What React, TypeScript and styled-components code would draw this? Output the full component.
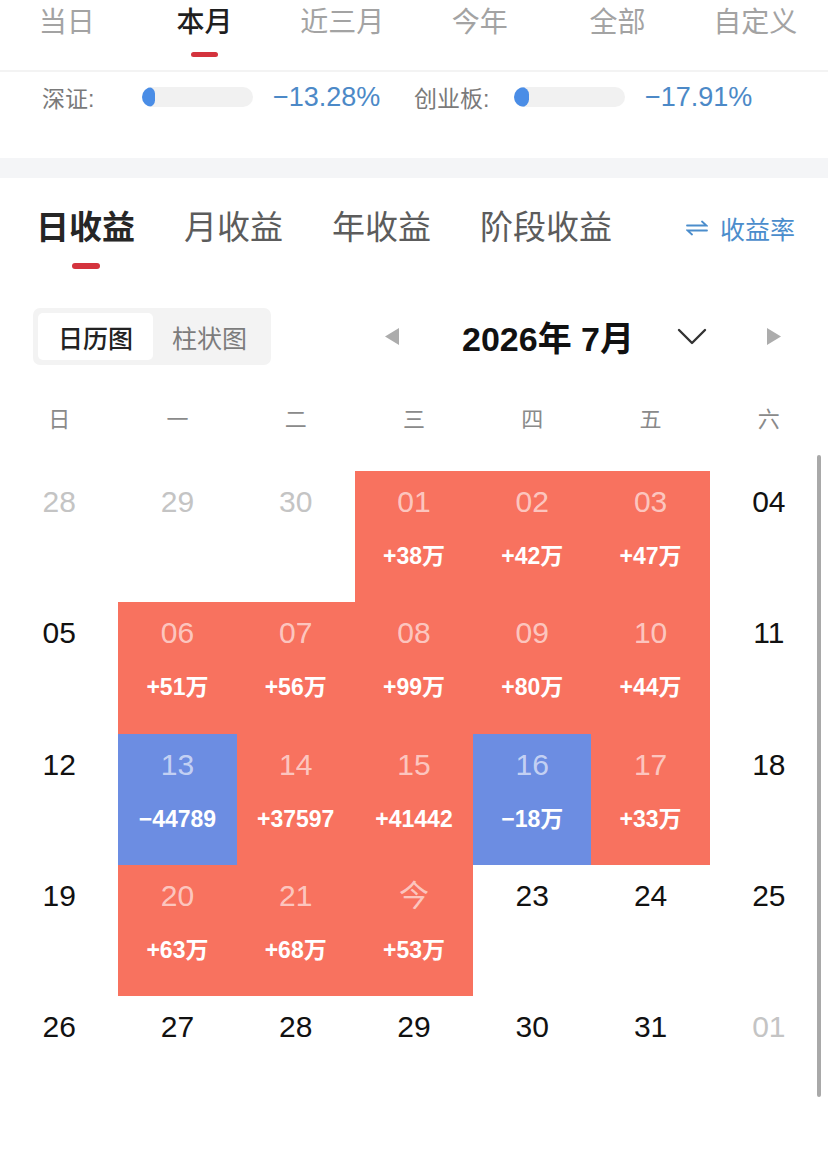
import * as React from 'react';
import styled, { createGlobalStyle } from 'styled-components';

const GlobalStyle = createGlobalStyle`
    html, body {
        margin: 0;
        padding: 0;
        background: #ffffff;
    }
    body {
        font-family: 'Liberation Sans', 'Noto Sans CJK SC', sans-serif;
        color: #222;
    }
`;

const RED = '#f8725f';
const BLUE = '#6c8de2';

const Page = styled.div`
    position: relative;
    width: 828px;
    min-height: 1151px;
    overflow: hidden;
    background: #fff;
`;

/* period tabs at the top */
const PeriodBar = styled.div`
    display: grid;
    grid-template-columns: repeat(6, 1fr);
    height: 70px;
    padding: 0 4px 0 0;
    border-bottom: 2px solid #f3f3f3;
    margin-left: -2px;
`;

const PeriodTab = styled.div<{ $active?: boolean }>`
    display: flex;
    flex-direction: column;
    align-items: center;
    padding-top: 7px;
    font-size: 28px;
    line-height: 32px;
    color: ${({ $active }) => ($active ? '#1f1f1f' : '#a3a3a3')};
    font-weight: ${({ $active }) => ($active ? 500 : 400)};
`;

const Underline = styled.span<{ $w: number; $h: number; $top: number }>`
    display: block;
    width: ${({ $w }) => $w}px;
    height: ${({ $h }) => $h}px;
    margin-top: ${({ $top }) => $top}px;
    border-radius: 3px;
    background: #d4333d;
`;

/* market index comparison */
const IndexRow = styled.div`
    display: grid;
    grid-template-columns: 372px 372px;
    align-items: center;
    height: 50px;
    padding-left: 42px;
    margin-bottom: 36px;
`;

const IndexItem = styled.div`
    display: grid;
    grid-template-columns: 100px 111px auto;
    align-items: center;
`;

const IndexLabel = styled.span`
    font-size: 23px;
    color: #7a7a7a;
`;

const Track = styled.div`
    height: 20px;
    border-radius: 10px;
    background: #f1f1f1;
    overflow: hidden;
`;

const Fill = styled.div`
    height: 100%;
    border-radius: 10px;
    background: #4a8de6;
`;

const IndexValue = styled.span`
    margin-left: 20px;
    font-size: 27px;
    color: #4c89c7;
`;

const Band = styled.div`
    height: 20px;
    background: #f4f5f7;
`;

/* earnings section tabs */
const SectionBar = styled.div`
    display: flex;
    align-items: flex-start;
    padding: 30px 33px 0 36px;
    height: 61px;
`;

const SectionTab = styled.div<{ $active?: boolean }>`
    display: flex;
    flex-direction: column;
    align-items: center;
    margin-right: 49px;
    font-size: 33px;
    line-height: 40px;
    font-weight: ${({ $active }) => ($active ? 700 : 400)};
    color: ${({ $active }) => ($active ? '#262626' : '#5c5c5c')};
`;

const RateSwitch = styled.div`
    display: flex;
    align-items: center;
    gap: 12px;
    margin-left: auto;
    height: 40px;
    font-size: 25px;
    color: #4b8dcc;
`;

/* view toggle and month navigation */
const Toolbar = styled.div`
    display: flex;
    align-items: center;
    height: 57px;
    margin-top: 39px;
    padding-left: 33px;
`;

const Segmented = styled.div`
    display: flex;
    width: 238px;
    height: 57px;
    padding: 5px;
    box-sizing: border-box;
    border-radius: 7px;
    background: #f3f3f3;
`;

const Segment = styled.div<{ $active?: boolean }>`
    flex: ${({ $active }) => ($active ? '0 0 115px' : '1')};
    display: flex;
    align-items: center;
    justify-content: center;
    border-radius: 5px;
    font-size: 25px;
    background: ${({ $active }) => ($active ? '#fff' : 'transparent')};
    color: ${({ $active }) => ($active ? '#222' : '#7c7c7c')};
    font-weight: ${({ $active }) => ($active ? 500 : 400)};
`;

const MonthNav = styled.div`
    display: flex;
    align-items: center;
    margin-left: 114px;
`;

const MonthTitle = styled.div`
    margin: 0 43px 0 63px;
    font-size: 34px;
    font-weight: 700;
    color: #111;
`;

const ChevronBox = styled.div`
    display: flex;
    margin-right: 60px;
`;

/* calendar */
const WeekRow = styled.div`
    display: grid;
    grid-template-columns: repeat(7, 1fr);
    height: 106px;
    padding-top: 40px;
    box-sizing: border-box;
`;

const WeekDay = styled.div`
    text-align: center;
    font-size: 22px;
    line-height: 30px;
    color: #8a8a8a;
`;

const CalendarGrid = styled.div`
    display: grid;
    grid-template-columns: repeat(7, 1fr);
    grid-auto-rows: 131.3px;
`;

type Tone = 'up' | 'down' | 'none';
type DayKind = 'outside' | 'normal';

const Cell = styled.div<{ $tone: Tone }>`
    display: flex;
    flex-direction: column;
    align-items: center;
    padding-top: 14px;
    background: ${({ $tone }) => ($tone === 'up' ? RED : $tone === 'down' ? BLUE : 'transparent')};
`;

const DayNum = styled.div<{ $tone: Tone; $kind: DayKind }>`
    font-size: 30px;
    line-height: 34px;
    color: ${({ $tone, $kind }) =>
        $tone !== 'none' ? 'rgba(255, 255, 255, 0.62)' : $kind === 'outside' ? '#c4c4c4' : '#111'};
`;

const Amount = styled.div`
    margin-top: 23px;
    font-size: 23px;
    line-height: 28px;
    font-weight: 700;
    color: #fff;
`;

const ScrollThumb = styled.div`
    position: absolute;
    top: 455px;
    right: 7px;
    width: 4px;
    height: 642px;
    border-radius: 2px;
    background: #a9a9a9;
`;

interface Day {
    label: string;
    tone?: Tone;
    kind?: DayKind;
    amount?: string;
}

const days: Day[] = [
    { label: '28', kind: 'outside' },
    { label: '29', kind: 'outside' },
    { label: '30', kind: 'outside' },
    { label: '01', tone: 'up', amount: '+38万' },
    { label: '02', tone: 'up', amount: '+42万' },
    { label: '03', tone: 'up', amount: '+47万' },
    { label: '04' },
    { label: '05' },
    { label: '06', tone: 'up', amount: '+51万' },
    { label: '07', tone: 'up', amount: '+56万' },
    { label: '08', tone: 'up', amount: '+99万' },
    { label: '09', tone: 'up', amount: '+80万' },
    { label: '10', tone: 'up', amount: '+44万' },
    { label: '11' },
    { label: '12' },
    { label: '13', tone: 'down', amount: '−44789' },
    { label: '14', tone: 'up', amount: '+37597' },
    { label: '15', tone: 'up', amount: '+41442' },
    { label: '16', tone: 'down', amount: '−18万' },
    { label: '17', tone: 'up', amount: '+33万' },
    { label: '18' },
    { label: '19' },
    { label: '20', tone: 'up', amount: '+63万' },
    { label: '21', tone: 'up', amount: '+68万' },
    { label: '今', tone: 'up', amount: '+53万' },
    { label: '23' },
    { label: '24' },
    { label: '25' },
    { label: '26' },
    { label: '27' },
    { label: '28' },
    { label: '29' },
    { label: '30' },
    { label: '31' },
    { label: '01', kind: 'outside' },
];

const periods = ['当日', '本月', '近三月', '今年', '全部', '自定义'];
const sections = ['日收益', '月收益', '年收益', '阶段收益'];
const weekDays = ['日', '一', '二', '三', '四', '五', '六'];

const SwapIcon = () => (
    <svg width="22" height="16" viewBox="0 0 22 16" fill="none" stroke="#4b8dcc" strokeWidth="1.8" strokeLinecap="round">
        <path d="M1 5.5h19.5L16 1.5" />
        <path d="M21 10.5H1.5L6 14.5" />
    </svg>
);

const Triangle = ({ dir }: { dir: 'left' | 'right' }) => (
    <svg width="14" height="17" viewBox="0 0 14 17">
        <path d={dir === 'left' ? 'M14 0v17L0 8.5z' : 'M0 0v17l14-8.5z'} fill="#acacac" />
    </svg>
);

const ChevronDown = () => (
    <svg width="30" height="17" viewBox="0 0 30 17" fill="none" stroke="#333" strokeWidth="2.4" strokeLinecap="round" strokeLinejoin="round">
        <path d="M2 2l13 13L28 2" />
    </svg>
);

const App: React.FunctionComponent = () => {
    return (
        <Page>
            <GlobalStyle />
            <PeriodBar>
                {periods.map((p) => (
                    <PeriodTab key={p} $active={p === '本月'}>
                        {p}
                        {p === '本月' && <Underline $w={27} $h={5} $top={13} />}
                    </PeriodTab>
                ))}
            </PeriodBar>

            <IndexRow>
                <IndexItem>
                    <IndexLabel>深证:</IndexLabel>
                    <Track>
                        <Fill style={{ width: 13 }} />
                    </Track>
                    <IndexValue>−13.28%</IndexValue>
                </IndexItem>
                <IndexItem>
                    <IndexLabel>创业板:</IndexLabel>
                    <Track>
                        <Fill style={{ width: 15 }} />
                    </Track>
                    <IndexValue>−17.91%</IndexValue>
                </IndexItem>
            </IndexRow>

            <Band />

            <SectionBar>
                {sections.map((s) => (
                    <SectionTab key={s} $active={s === '日收益'}>
                        {s}
                        {s === '日收益' && <Underline $w={28} $h={6} $top={15} />}
                    </SectionTab>
                ))}
                <RateSwitch>
                    <SwapIcon />
                    收益率
                </RateSwitch>
            </SectionBar>

            <Toolbar>
                <Segmented>
                    <Segment $active>日历图</Segment>
                    <Segment>柱状图</Segment>
                </Segmented>
                <MonthNav>
                    <Triangle dir="left" />
                    <MonthTitle>2026年 7月</MonthTitle>
                    <ChevronBox>
                        <ChevronDown />
                    </ChevronBox>
                    <Triangle dir="right" />
                </MonthNav>
            </Toolbar>

            <WeekRow>
                {weekDays.map((w) => (
                    <WeekDay key={w}>{w}</WeekDay>
                ))}
            </WeekRow>

            <CalendarGrid>
                {days.map((d, i) => {
                    const tone = d.tone ?? 'none';
                    return (
                        <Cell key={i} $tone={tone}>
                            <DayNum $tone={tone} $kind={d.kind ?? 'normal'}>
                                {d.label}
                            </DayNum>
                            {d.amount && <Amount>{d.amount}</Amount>}
                        </Cell>
                    );
                })}
            </CalendarGrid>

            <ScrollThumb />
        </Page>
    );
};

export default App;
